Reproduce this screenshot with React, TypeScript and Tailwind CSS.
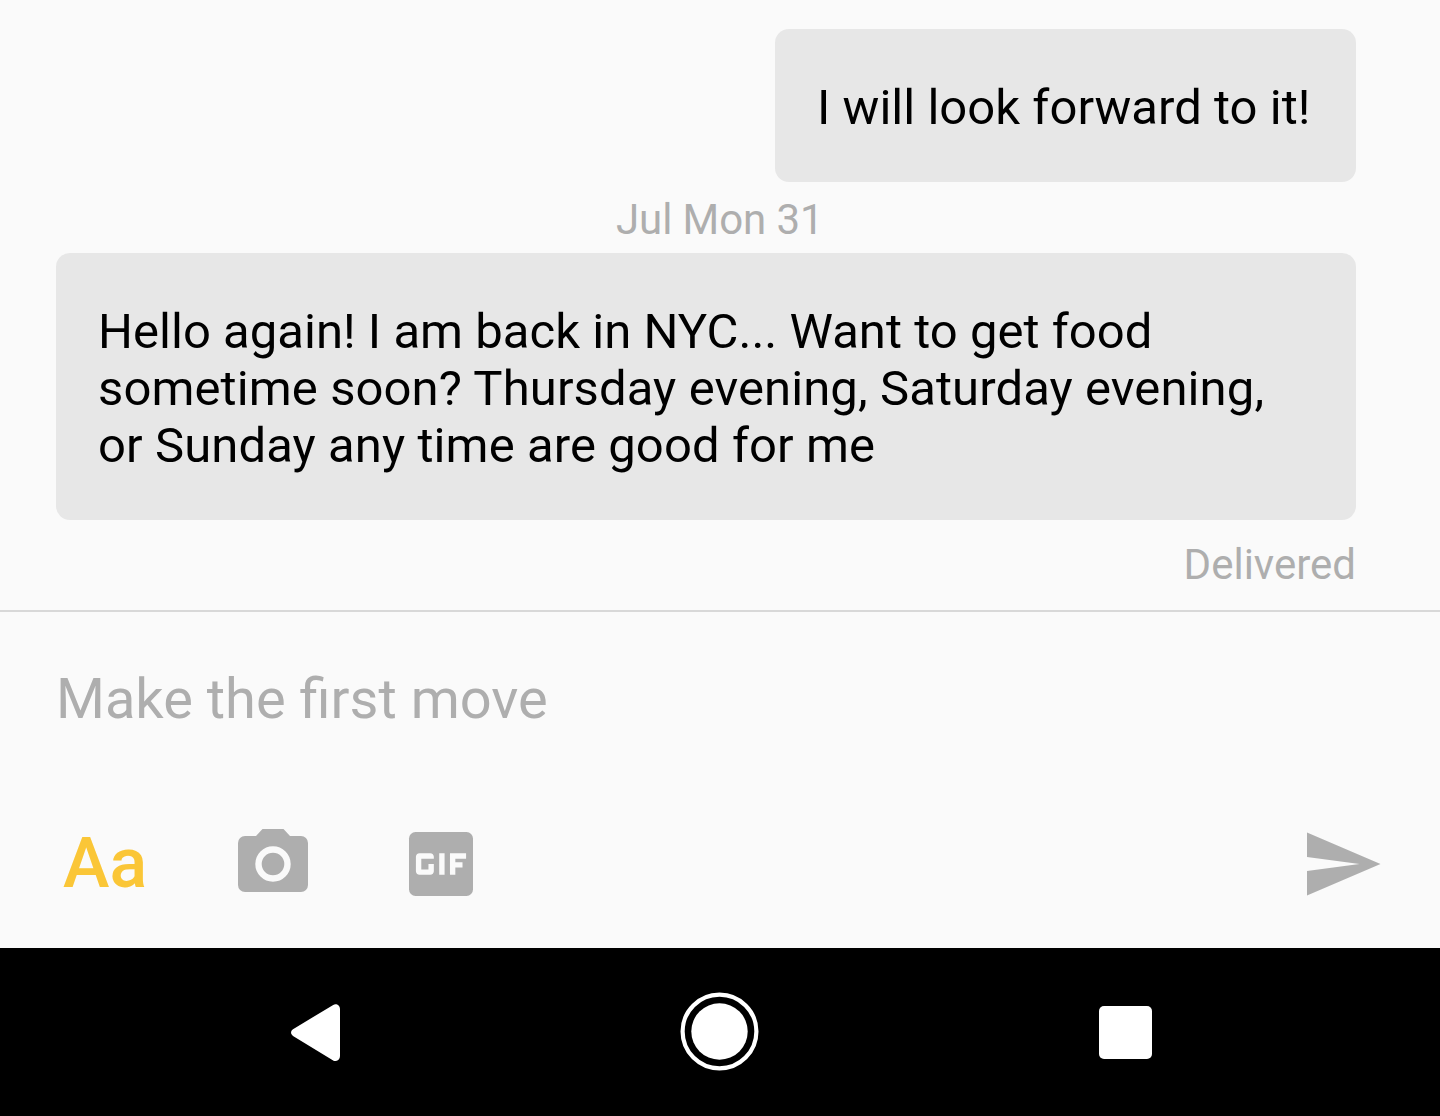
import type { ReactNode } from "react";
import { MdGif } from "react-icons/md";

function Bubble({ children }: { children: ReactNode }) {
  return (
    <div className="rounded-[14px] bg-[#e7e7e7] px-[42px] pt-[50px] pb-[46px] text-[49px] leading-[57px] whitespace-nowrap text-black">
      {children}
    </div>
  );
}

function CameraIcon() {
  return (
    <svg width="70" height="63" viewBox="0 0 70 63" fill="#aeaeae">
      <path d="M24.5 0h21l6.5 7h11a7 7 0 0 1 7 7v42a7 7 0 0 1-7 7H7a7 7 0 0 1-7-7V14a7 7 0 0 1 7-7h11z" />
      <circle cx="35" cy="35" r="14.5" fill="none" stroke="#fafafa" strokeWidth="6.4" />
    </svg>
  );
}

function GifIcon() {
  return (
    <div className="flex size-16 items-center justify-center p-[0.4px]">
      <div className="flex size-full items-center justify-center rounded-[6.5px] bg-[#aeaeae]">
        <MdGif className="size-[86px] shrink-0 text-[#fafafa]" />
      </div>
    </div>
  );
}

function SendIcon() {
  return (
    <svg width="74" height="64" viewBox="0 0 74 64" fill="#aeaeae">
      <path d="M0 0.4L73.5 32L0 63.6V39L52.5 32L0 25z" />
    </svg>
  );
}

export default function App() {
  return (
    <div className="flex h-[1116px] w-[1440px] flex-col overflow-hidden bg-[#fafafa] font-[Roboto,sans-serif]">
      <main className="flex h-[610px] flex-col pt-[29px] pr-[84px] pl-14">
        <div className="w-[581px] self-end">
          <Bubble>
            <p className="tracking-[0.03px]">I will look forward to it!</p>
          </Bubble>
        </div>
        <div className="mt-[13px] mb-2 ml-[560px] text-[42px] leading-[50px] tracking-[-0.1px] text-[#aeaeae]">
          Jul Mon 31
        </div>
        <Bubble>
          <p className="tracking-[0.03px]">Hello again! I am back in NYC... Want to get food</p>
          <p className="tracking-[0.1px]">sometime soon? Thursday evening, Saturday evening,</p>
          <p className="tracking-[0.09px]">or Sunday any time are good for me</p>
        </Bubble>
        <div className="mt-5 self-end text-[42px] leading-[50px] text-[#aeaeae]">Delivered</div>
      </main>

      <section className="h-[338px] border-t-2 border-[#d8d8d8] pt-[54px]">
        <div className="pl-14 text-[56px] leading-[66px] text-[#aeaeae]">Make the first move</div>
        <div className="mt-[97px] flex h-[67px] items-start pr-[59px] pl-[63px]">
          <span className="w-[175px] text-[70px] leading-[68px] font-medium text-[#fac637]">Aa</span>
          <CameraIcon />
          <div className="ml-[101px] pt-[3px]">
            <GifIcon />
          </div>
          <div className="ml-auto pt-[3px]">
            <SendIcon />
          </div>
        </div>
      </section>

      <nav className="flex h-[168px] items-center bg-black">
        <svg width="51" height="58" viewBox="0 0 51 58" fill="white" className="ml-[290px]">
          <path d="M3 26.2L43.2 1.9C46 0 50 2 50 6V53C50 57 46 59.2 43.2 57.4L3 33C0.4 31 0.4 28.2 3 26.2z" />
        </svg>
        <svg width="80" height="80" viewBox="0 0 80 80" fill="white" className="ml-[339px]">
          <circle cx="39.5" cy="39.5" r="36.9" fill="none" stroke="white" strokeWidth="4.2" />
          <circle cx="39.5" cy="39.5" r="28.2" />
        </svg>
        <div className="ml-[339px] size-[53px] rounded-[5px] bg-white" />
      </nav>
    </div>
  );
}
